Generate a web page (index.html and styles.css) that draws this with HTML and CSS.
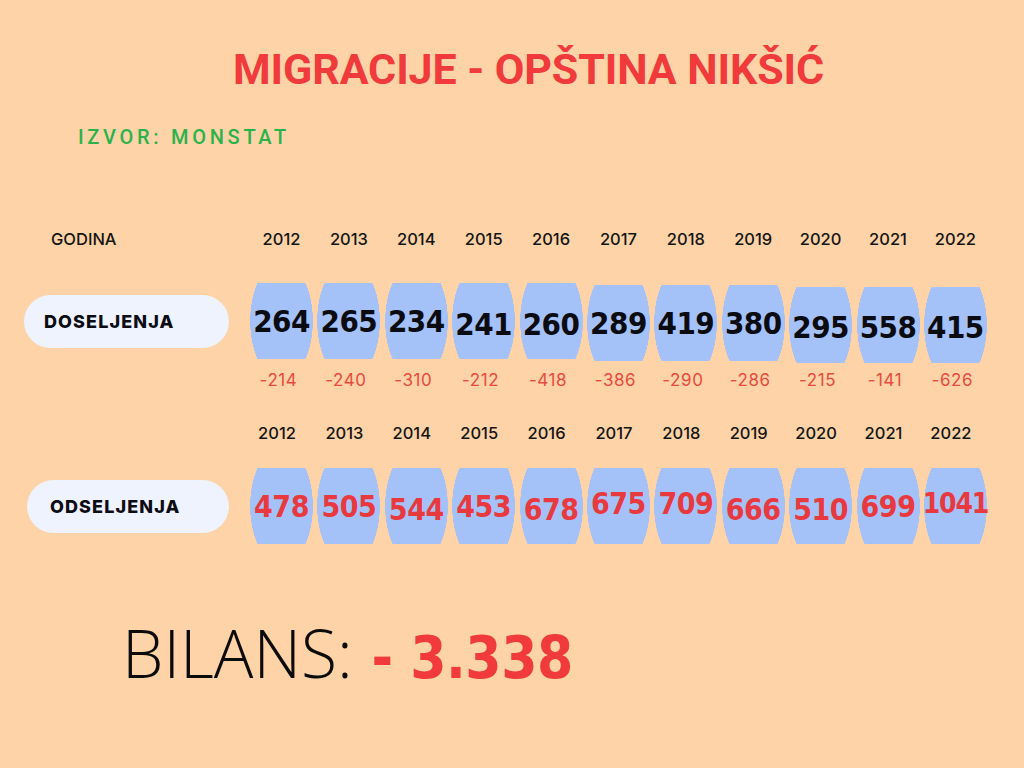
FILE: index.html
```html
<!DOCTYPE html>
<html lang="sr">
<head>
<meta charset="utf-8">
<title>Migracije - Opština Nikšić</title>
<link rel="stylesheet" href="styles.css">
</head>
<body>
<div class="page">
  <h1 class="title">MIGRACIJE - OPŠTINA NIKŠIĆ</h1>
  <p class="source">IZVOR: MONSTAT</p>

  <section class="block block-in">
    <div class="row years">
      <div class="label-cell"><span class="godina">GODINA</span></div>
      <div class="cols">
        <span>2012</span><span>2013</span><span>2014</span><span>2015</span><span>2016</span><span>2017</span><span>2018</span><span>2019</span><span>2020</span><span>2021</span><span>2022</span>
      </div>
    </div>
    <div class="row data">
      <div class="label-cell"><div class="pill">DOSELJENJA</div></div>
      <div class="cols barrels">
        <div class="barrel"><span>264</span></div>
        <div class="barrel"><span>265</span></div>
        <div class="barrel"><span>234</span></div>
        <div class="barrel"><span>241</span></div>
        <div class="barrel"><span>260</span></div>
        <div class="barrel"><span>289</span></div>
        <div class="barrel"><span>419</span></div>
        <div class="barrel"><span>380</span></div>
        <div class="barrel"><span>295</span></div>
        <div class="barrel"><span>558</span></div>
        <div class="barrel"><span>415</span></div>
      </div>
    </div>
    <div class="row diffs">
      <div class="label-cell"></div>
      <div class="cols">
        <span>-214</span><span>-240</span><span>-310</span><span>-212</span><span>-418</span><span>-386</span><span>-290</span><span>-286</span><span>-215</span><span>-141</span><span>-626</span>
      </div>
    </div>
  </section>

  <section class="block block-out">
    <div class="row years">
      <div class="label-cell"></div>
      <div class="cols">
        <span>2012</span><span>2013</span><span>2014</span><span>2015</span><span>2016</span><span>2017</span><span>2018</span><span>2019</span><span>2020</span><span>2021</span><span>2022</span>
      </div>
    </div>
    <div class="row data">
      <div class="label-cell"><div class="pill">ODSELJENJA</div></div>
      <div class="cols barrels">
        <div class="barrel"><span>478</span></div>
        <div class="barrel"><span>505</span></div>
        <div class="barrel"><span>544</span></div>
        <div class="barrel"><span>453</span></div>
        <div class="barrel"><span>678</span></div>
        <div class="barrel"><span>675</span></div>
        <div class="barrel"><span>709</span></div>
        <div class="barrel"><span>666</span></div>
        <div class="barrel"><span>510</span></div>
        <div class="barrel"><span>699</span></div>
        <div class="barrel"><span>1041</span></div>
      </div>
    </div>
  </section>

  <p class="bilans"><span class="bilans-label">BILANS:</span> <span class="bilans-value">- 3.338</span></p>
</div>
</body>
</html>
```

FILE: styles.css
```css
* { box-sizing: border-box; }

html, body {
  margin: 0;
  padding: 0;
}

body {
  background: #fdd3a7;
  width: 1024px;
  height: 768px;
  overflow: hidden;
  font-family: Inter, "Noto Sans", sans-serif;
  color: #111;
}

.page {
  padding-top: 43px;
}

.title {
  margin: 0 0 0 233px;
  font-family: Roboto, "Liberation Sans", sans-serif;
  font-weight: 700;
  font-size: 43px;
  line-height: 52px;
  color: #f03a3b;
  letter-spacing: -0.1px;
}

.source {
  margin: 30px 0 0 78px;
  font-family: Roboto, "Liberation Sans", sans-serif;
  font-weight: 500;
  font-size: 20px;
  line-height: 24px;
  letter-spacing: 3.7px;
  color: #2bb24c;
}

.block-in {
  margin-top: 80px;
}

.row {
  display: flex;
  align-items: center;
}

.label-cell {
  width: 250px;
  flex: none;
}

.cols {
  display: grid;
  grid-template-columns: repeat(11, 63px);
  column-gap: 4.4px;
  justify-items: center;
  align-items: center;
}

.years {
  height: 20px;
  font-size: 16.5px;
  font-weight: 500;
  line-height: 20px;
  color: #151515;
}

.godina {
  padding-left: 51px;
}

.data {
  margin-top: 30px;
}

.pill {
  width: 205px;
  height: 53px;
  margin-left: 24px;
  border-radius: 27px;
  background: #eef3fe;
  display: flex;
  align-items: center;
  padding-left: 20px;
  font-weight: 800;
  font-size: 18px;
  letter-spacing: 1.1px;
  color: #0c0c14;
}

.block-out .pill {
  width: 202px;
  margin-left: 27px;
  padding-left: 23px;
}

.barrel {
  width: 63px;
  height: 76px;
  border-radius: 9px;
  background: radial-gradient(ellipse 50% 78% at 50% 50%, #a5c2f8 99%, rgba(165, 194, 248, 0) 100%);
  display: flex;
  align-items: center;
  justify-content: center;
  font-family: "DejaVu Sans Condensed", "DejaVu Sans", sans-serif;
  font-weight: 700;
  font-stretch: condensed;
  font-size: 31px;
  letter-spacing: -0.5px;
  color: #0b0b12;
}

.block-in .barrel:nth-child(n+6) { margin-top: 4px; }
.block-in .barrel:nth-child(n+9) { margin-top: 8px; }
.block-in .barrel:nth-child(4) span,
.block-in .barrel:nth-child(5) span { margin-top: 6px; }
.block-in .barrel:nth-child(n+9) span { margin-top: 3px; }

.block-out .barrel {
  color: #e8393f;
  font-size: 30px;
}

.block-out .barrel:nth-child(11) {
  font-size: 28px;
  letter-spacing: -1.2px;
}

.block-out .barrel:nth-child(3) span,
.block-out .barrel:nth-child(5) span,
.block-out .barrel:nth-child(8) span,
.block-out .barrel:nth-child(9) span { margin-top: 6px; }
.block-out .barrel:nth-child(6) span,
.block-out .barrel:nth-child(7) span,
.block-out .barrel:nth-child(11) span { margin-top: -6px; }

.diffs {
  margin-top: 7px;
  height: 20px;
  font-size: 17px;
  line-height: 20px;
  font-weight: 400;
  letter-spacing: 0.6px;
  color: #e84a40;
}

.diffs .cols {
  margin-left: -3px;
}

.block-out {
  margin-top: 33px;
}

.block-out .years .cols {
  margin-left: -4.5px;
}

.block-out .data {
  margin-top: 25px;
}

.bilans {
  margin: 68px 0 0 122px;
  font-size: 66px;
  line-height: 80px;
  white-space: nowrap;
}

.bilans-label {
  font-family: "Open Sans", "Noto Sans", sans-serif;
  font-weight: 300;
  font-stretch: 90%;
  color: #0b0b0b;
}

.bilans-value {
  font-family: "DejaVu Sans Condensed", "DejaVu Sans", sans-serif;
  font-stretch: condensed;
  font-weight: 700;
  font-size: 58px;
  letter-spacing: -0.5px;
  color: #f03a3b;
}
```
